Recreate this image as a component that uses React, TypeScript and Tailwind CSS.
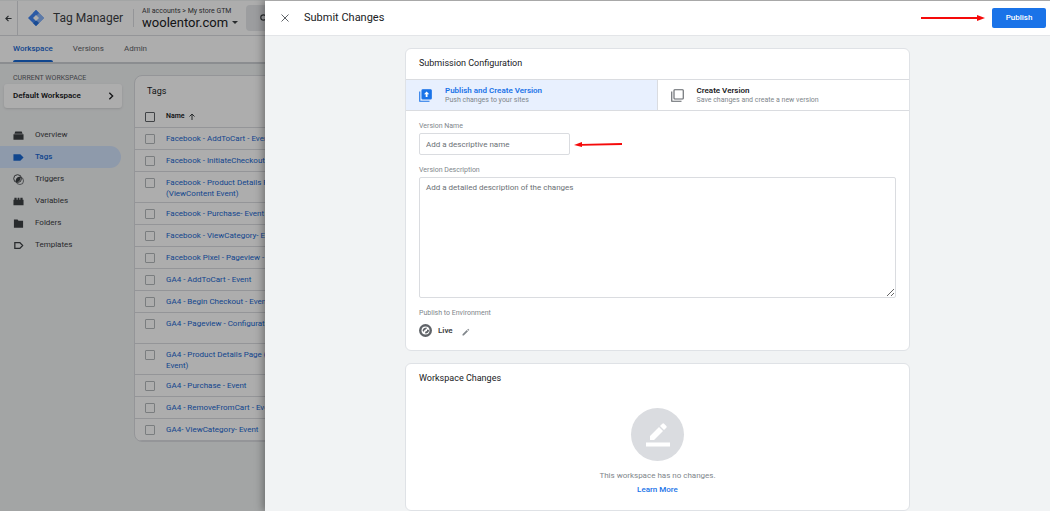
import { useState } from 'react'
import type { ReactNode } from 'react'

const navItems = ['Overview', 'Tags', 'Triggers', 'Variables', 'Folders', 'Templates']

const tags = [
  { lines: ['Facebook - AddToCart - Event'] },
  { lines: ['Facebook - InitiateCheckout - Event'] },
  { lines: ['Facebook - Product Details Page', '(ViewContent Event)'] },
  { lines: ['Facebook - Purchase- Event'] },
  { lines: ['Facebook - ViewCategory- Event'] },
  { lines: ['Facebook Pixel - Pageview - Event'] },
  { lines: ['GA4 - AddToCart - Event'] },
  { lines: ['GA4 - Begin Checkout - Event'] },
  { lines: ['GA4 - Pageview - Configuration'], tall: true },
  { lines: ['GA4 - Product Details Page (View', 'Event)'] },
  { lines: ['GA4 - Purchase - Event'] },
  { lines: ['GA4 - RemoveFromCart - Event'] },
  { lines: ['GA4- ViewCategory- Event'] },
]

const navIcons: Record<string, ReactNode> = {
  Overview: <path d="M5 3h14l2 5H3zM1 9.500h22V21H1z" />,
  Tags: <path d="M1 5h15l7 7-7 7H1z" />,
  Triggers: (
    <>
      <circle cx="10" cy="10" r="8.500" fill="none" stroke="currentColor" strokeWidth="2" />
      <path d="M20.500 7A9 9 0 0 1 8 21.500a9 9 0 0 0 12.500-14.500z" />
      <path d="M6 14a9 9 0 0 1 10-8 9 9 0 0 1-9 12z" />
      <circle cx="15" cy="15" r="8" fill="none" stroke="currentColor" strokeWidth="1.500" />
    </>
  ),
  Variables: <path d="M1 8h2V4h5v4h2V4h4v4h2V4h5v4h2v12H1z" />,
  Folders: <path d="M2 3h8l2 3h10v15H2z" />,
  Templates: <path d="M4 5.500h11l6 6.500-6 6.500H4z" fill="none" stroke="currentColor" strokeWidth="2.800" />,
}

function TagManagerLogo() {
  return (
    <svg className="h-4 w-4 shrink-0" viewBox="0 0 32 32">
      <path d="M16 0 32 16 16 32 0 16z" fill="#4285f4" />
      <path d="M16 0l16 16-16 16-6-6 10-10L10 6z" fill="#8ab4f8" />
      <path d="M10 6l6-6 6 6-12 12z" fill="#4285f4" />
      <path d="M16 20l6 6-6 6-6-6z" fill="#246fdb" />
      <path d="M16 10l6 6-6 6-6-6z" fill="#fff" />
    </svg>
  )
}

function Header() {
  return (
    <header className="flex h-[35px] items-center border-b border-[#dadce0] bg-white">
      <button aria-label="Back" className="flex h-full w-[18px] items-center justify-center border-r border-[#dadce0]">
        <svg className="h-[7px] w-[7px]" viewBox="0 0 16 16" fill="none" stroke="#3c4043" strokeWidth="2.600">
          <path d="M15 8H2M8 2 2 8l6 6" />
        </svg>
      </button>
      <div className="flex items-center pl-[10px]">
        <TagManagerLogo />
        <span className="ml-[9px] whitespace-nowrap text-[12px] text-[#3c4043]">Tag Manager</span>
      </div>
      <div className="ml-[10px] flex h-[18px] items-center border-l border-[#dadce0] pl-2">
        <div className="whitespace-nowrap">
          <div className="text-[7px] leading-[9px] text-[#3c4043]">All accounts &gt; My store GTM</div>
          <button className="flex items-center text-[13px] leading-[14px] text-[#202124]">
            woolentor.com
            <svg className="ml-1 h-[3px] w-[6px]" viewBox="0 0 10 5"><path d="M0 0h10L5 5z" fill="#3c4043" /></svg>
          </button>
        </div>
      </div>
      <button aria-label="Search" className="ml-2 flex h-[26px] w-[200px] shrink-0 items-center rounded bg-[#e6e8eb] pl-[14px]">
        <svg className="h-[9px] w-[9px]" viewBox="0 0 18 18" fill="none" stroke="#3c4043" strokeWidth="2.400">
          <circle cx="7" cy="7" r="5.400" />
          <path d="m11 11 6 6" />
        </svg>
      </button>
    </header>
  )
}

function Sidebar() {
  return (
    <aside className="w-[134px] shrink-0">
      <p className="pl-[13px] pt-[9px] text-[7px] leading-[10px] text-[#5f6368]">CURRENT WORKSPACE</p>
      <button className="ml-1 mt-px flex h-6 w-[118px] items-center justify-between rounded-[3px] bg-white pl-[9px] pr-2 text-[8px] font-semibold text-[#202124] shadow">
        Default Workspace
        <svg className="h-2 w-[6px]" viewBox="0 0 9 12" fill="none" stroke="#202124" strokeWidth="2"><path d="m2 1 5 5-5 5" /></svg>
      </button>
      <nav className="mt-4 w-[121px]">
        {navItems.map((item) => (
          <a
            key={item}
            href="#"
            className={`flex h-[22px] items-center gap-[11px] rounded-r-full pl-[13px] text-[8px] ${
              item === 'Tags' ? 'bg-[#d2e3fc] font-medium text-[#1967d2]' : 'text-[#3c4043]'
            }`}
          >
            <svg className="h-[11px] w-[11px]" viewBox="0 0 24 24" fill="currentColor">
              {navIcons[item]}
            </svg>
            {item}
          </a>
        ))}
      </nav>
    </aside>
  )
}

function Checkbox({ label, dark }: { label: string; dark?: boolean }) {
  return (
    <input
      type="checkbox"
      aria-label={label}
      className={`block h-[10px] w-[10px] appearance-none rounded-[1px] border ${dark ? 'border-[#5f6368]' : 'border-[#b4b8bc]'}`}
    />
  )
}

function TagsTable() {
  return (
    <section className="mt-[11px] flex-1 overflow-hidden rounded-lg border border-[#dadce0] bg-white">
      <h2 className="h-[30px] pl-3 pt-2 text-[9px] leading-[14px] text-[#202124]">Tags</h2>
      <table className="w-full border-separate border-spacing-0 text-left">
        <thead>
          <tr>
            <th className="h-[22px] w-[31px] border-b border-[#dadce0] pl-[10px]">
              <Checkbox label="Select all tags" dark />
            </th>
            <th className="h-[22px] border-b border-[#dadce0] text-[7px] font-semibold text-[#202124]">
              <span className="flex items-center gap-1">
                Name
                <svg className="h-[7px] w-[6px]" viewBox="0 0 12 14" fill="none" stroke="#3c4043" strokeWidth="2"><path d="M6 14V2M1 7l5-5 5 5" /></svg>
              </span>
            </th>
          </tr>
        </thead>
        <tbody>
          {tags.map((tag) => (
            <tr key={tag.lines[0]} className="align-top">
              <td className="border-b border-[#dadce0] pl-[10px] pt-[6px]">
                <Checkbox label={tag.lines[0]} />
              </td>
              <td className={`whitespace-nowrap border-b border-[#dadce0] pt-[5px] text-[8px] leading-[11px] ${tag.lines.length > 1 || tag.tall ? 'h-[31px]' : 'h-[22px]'}`}>
                <a href="#" className="block text-[#1967d2]">
                  {tag.lines.map((line) => (
                    <span key={line} className="block">{line}</span>
                  ))}
                </a>
              </td>
            </tr>
          ))}
        </tbody>
      </table>
    </section>
  )
}

function Workspace() {
  return (
    <div className="h-full overflow-hidden bg-[#f1f3f4] pt-px">
      <Header />
      <nav className="flex h-7 gap-5 border-b-2 border-[#cdd0d4] bg-white pl-[13px] text-[8px] text-[#5f6368]">
        <a href="#" className="relative flex items-center font-medium text-[#1967d2]">
          Workspace
          <span className="absolute inset-x-0 bottom-0 h-[2px] rounded-t bg-[#1967d2]" />
        </a>
        <a href="#" className="flex items-center">Versions</a>
        <a href="#" className="flex items-center">Admin</a>
      </nav>
      <div className="flex items-start">
        <Sidebar />
        <TagsTable />
      </div>
    </div>
  )
}

function LayersIcon({ filled }: { filled?: boolean }) {
  return (
    <svg className="h-[13px] w-[13px] shrink-0" viewBox="0 0 26 26" fill="none" stroke={filled ? '#1a73e8' : '#5f6368'} strokeWidth="2.200">
      <path d="M1.500 5v19.500H21" />
      <rect x="6" y="1.500" width="18.500" height="18.500" rx="1.500" fill={filled ? '#1a73e8' : 'none'} />
      {filled && <path d="m15.200 5-5.200 5.500h3.400V16H17v-5.500h3.400z" fill="#fff" stroke="none" />}
    </svg>
  )
}

type OptionProps = {
  title: string
  text: string
  active: boolean
  onClick: () => void
  icon: ReactNode
}

function Option({ title, text, active, onClick, icon }: OptionProps) {
  return (
    <button
      onClick={onClick}
      aria-pressed={active}
      className={`flex h-[30px] items-center gap-[13px] pl-[13px] text-left ${active ? 'bg-[#e8f0fe]' : 'bg-white'}`}
    >
      {icon}
      <span>
        <span className={`block text-[8px] font-semibold leading-[10px] ${active ? 'text-[#1a73e8]' : 'text-[#202124]'}`}>{title}</span>
        <span className="block text-[7px] leading-[9px] text-[#80868b]">{text}</span>
      </span>
    </button>
  )
}

function SubmissionCard() {
  const [mode, setMode] = useState('publish')

  return (
    <section className="rounded-md border border-[#dfe2e6] bg-white">
      <h2 className="flex h-[30px] items-center pl-[13px] text-[9px] text-[#202124]">Submission Configuration</h2>
      <div className="grid grid-cols-2 divide-x divide-[#dadce0] border-y border-[#dadce0]">
        <Option
          title="Publish and Create Version"
          text="Push changes to your sites"
          active={mode === 'publish'}
          onClick={() => setMode('publish')}
          icon={<LayersIcon filled />}
        />
        <Option
          title="Create Version"
          text="Save changes and create a new version"
          active={mode === 'create'}
          onClick={() => setMode('create')}
          icon={<LayersIcon />}
        />
      </div>
      <div className="px-[13px] pb-[13px] pt-[10px] text-[7px] leading-[10px] text-[#80868b]">
        <label htmlFor="version-name" className="block">Version Name</label>
        <div className="mt-[2px] flex items-center">
          <input
            id="version-name"
            placeholder="Add a descriptive name"
            className="h-[22px] w-[151px] rounded-[2px] border border-[#dadce0] px-[6px] text-[8px] placeholder:text-[#6b7075]"
          />
          <svg className="ml-1 h-[7px] w-12" viewBox="0 0 48 7">
            <path d="M7 3.800 48 3" stroke="#f50a0a" strokeWidth="1.800" />
            <path d="M0 4 8 1v5z" fill="#f50a0a" />
          </svg>
        </div>
        <label htmlFor="version-description" className="mt-[10px] block">Version Description</label>
        <textarea
          id="version-description"
          placeholder="Add a detailed description of the changes"
          className="mt-[2px] block h-[121px] w-full rounded-[2px] border border-[#dadce0] px-[6px] py-1 text-[8px] leading-[11px] placeholder:text-[#6b7075]"
        />
        <p className="mt-[10px]">Publish to Environment</p>
        <div className="mt-[6px] flex h-[13px] items-center">
          <svg className="h-[13px] w-[13px]" viewBox="0 0 26 26">
            <circle cx="13" cy="13" r="13" fill="#5f6368" />
            <circle cx="13" cy="13" r="8" fill="#fff" />
            <path d="M7 13c1-4 4-6 8-6l1 2-3 1v2l-3 1v3zm5 5 1-3 3-1v-3l4 1c0 4-3 7-7 7z" fill="#5f6368" />
          </svg>
          <span className="ml-[6px] text-[8px] font-semibold text-[#3c4043]">Live</span>
          <button aria-label="Edit environment" className="ml-[9px] mt-[2px]">
            <svg className="block h-2 w-2" viewBox="0 0 16 16" fill="#80868b">
              <path d="M1 12.500V15h2.500L12 6.500 9.500 4zM13 5.500l1.700-1.700L12.200 1.300 10.500 3z" />
            </svg>
          </button>
        </div>
      </div>
    </section>
  )
}

function ChangesCard() {
  return (
    <section className="mt-3 flex flex-col rounded-md border border-[#dfe2e6] bg-white pb-[14px]">
      <h2 className="flex h-[30px] items-center pl-[13px] text-[9px] text-[#202124]">Workspace Changes</h2>
      <div className="mt-[14px] flex flex-col items-center">
        <span className="flex h-[53px] w-[53px] items-center justify-center rounded-full bg-[#dadce0]">
          <svg className="h-6 w-6" viewBox="0 0 24 24" fill="#fff">
            <path d="M0 19.500h24v4H0zM4 13v4h4L17 8l-4-4zM18 7l2.300-2.300a1.300 1.300 0 0 0 0-1.800L18.100.700a1.300 1.300 0 0 0-1.800 0L14 3z" />
          </svg>
        </span>
        <p className="mt-[9px] text-[8px] leading-[12px] text-[#80868b]">This workspace has no changes.</p>
        <a href="#" className="mt-[2px] text-[8px] font-medium leading-[12px] text-[#1a73e8]">Learn More</a>
      </div>
    </section>
  )
}

function SubmitDrawer() {
  return (
    <div role="dialog" aria-label="Submit Changes" className="absolute inset-y-0 left-[265px] right-0 flex flex-col border-t border-[#a8a8a8] bg-[#f1f3f4] shadow-[-2px_0_8px_rgba(0,0,0,0.35)]">
      <header className="flex h-[35px] shrink-0 items-center border-b border-[#e3e5e8] bg-white pl-4 pr-1">
        <button aria-label="Close">
          <svg className="block h-2 w-2" viewBox="0 0 16 16" stroke="#5f6368" strokeWidth="2"><path d="m1 1 14 14M15 1 1 15" /></svg>
        </button>
        <h1 className="ml-[15px] text-[11px] text-[#202124]">Submit Changes</h1>
        <svg className="ml-auto h-[7px] w-16" viewBox="0 0 64 7">
          <path d="M0 3h57" stroke="#f50a0a" strokeWidth="1.800" />
          <path d="m64 3-8-3v6z" fill="#f50a0a" />
        </svg>
        <button className="ml-[7px] h-5 w-[54px] rounded-[2px] bg-[#1a73e8] text-[8px] font-medium text-white">Publish</button>
      </header>
      <main className="flex-1 overflow-hidden px-[140px] pt-3">
        <SubmissionCard />
        <ChangesCard />
      </main>
    </div>
  )
}

function App() {
  return (
    <div className="relative h-screen overflow-hidden font-[Roboto,'Liberation_Sans',sans-serif]">
      <Workspace />
      <div className="absolute inset-0 bg-black/32" />
      <SubmitDrawer />
    </div>
  )
}

export default App
